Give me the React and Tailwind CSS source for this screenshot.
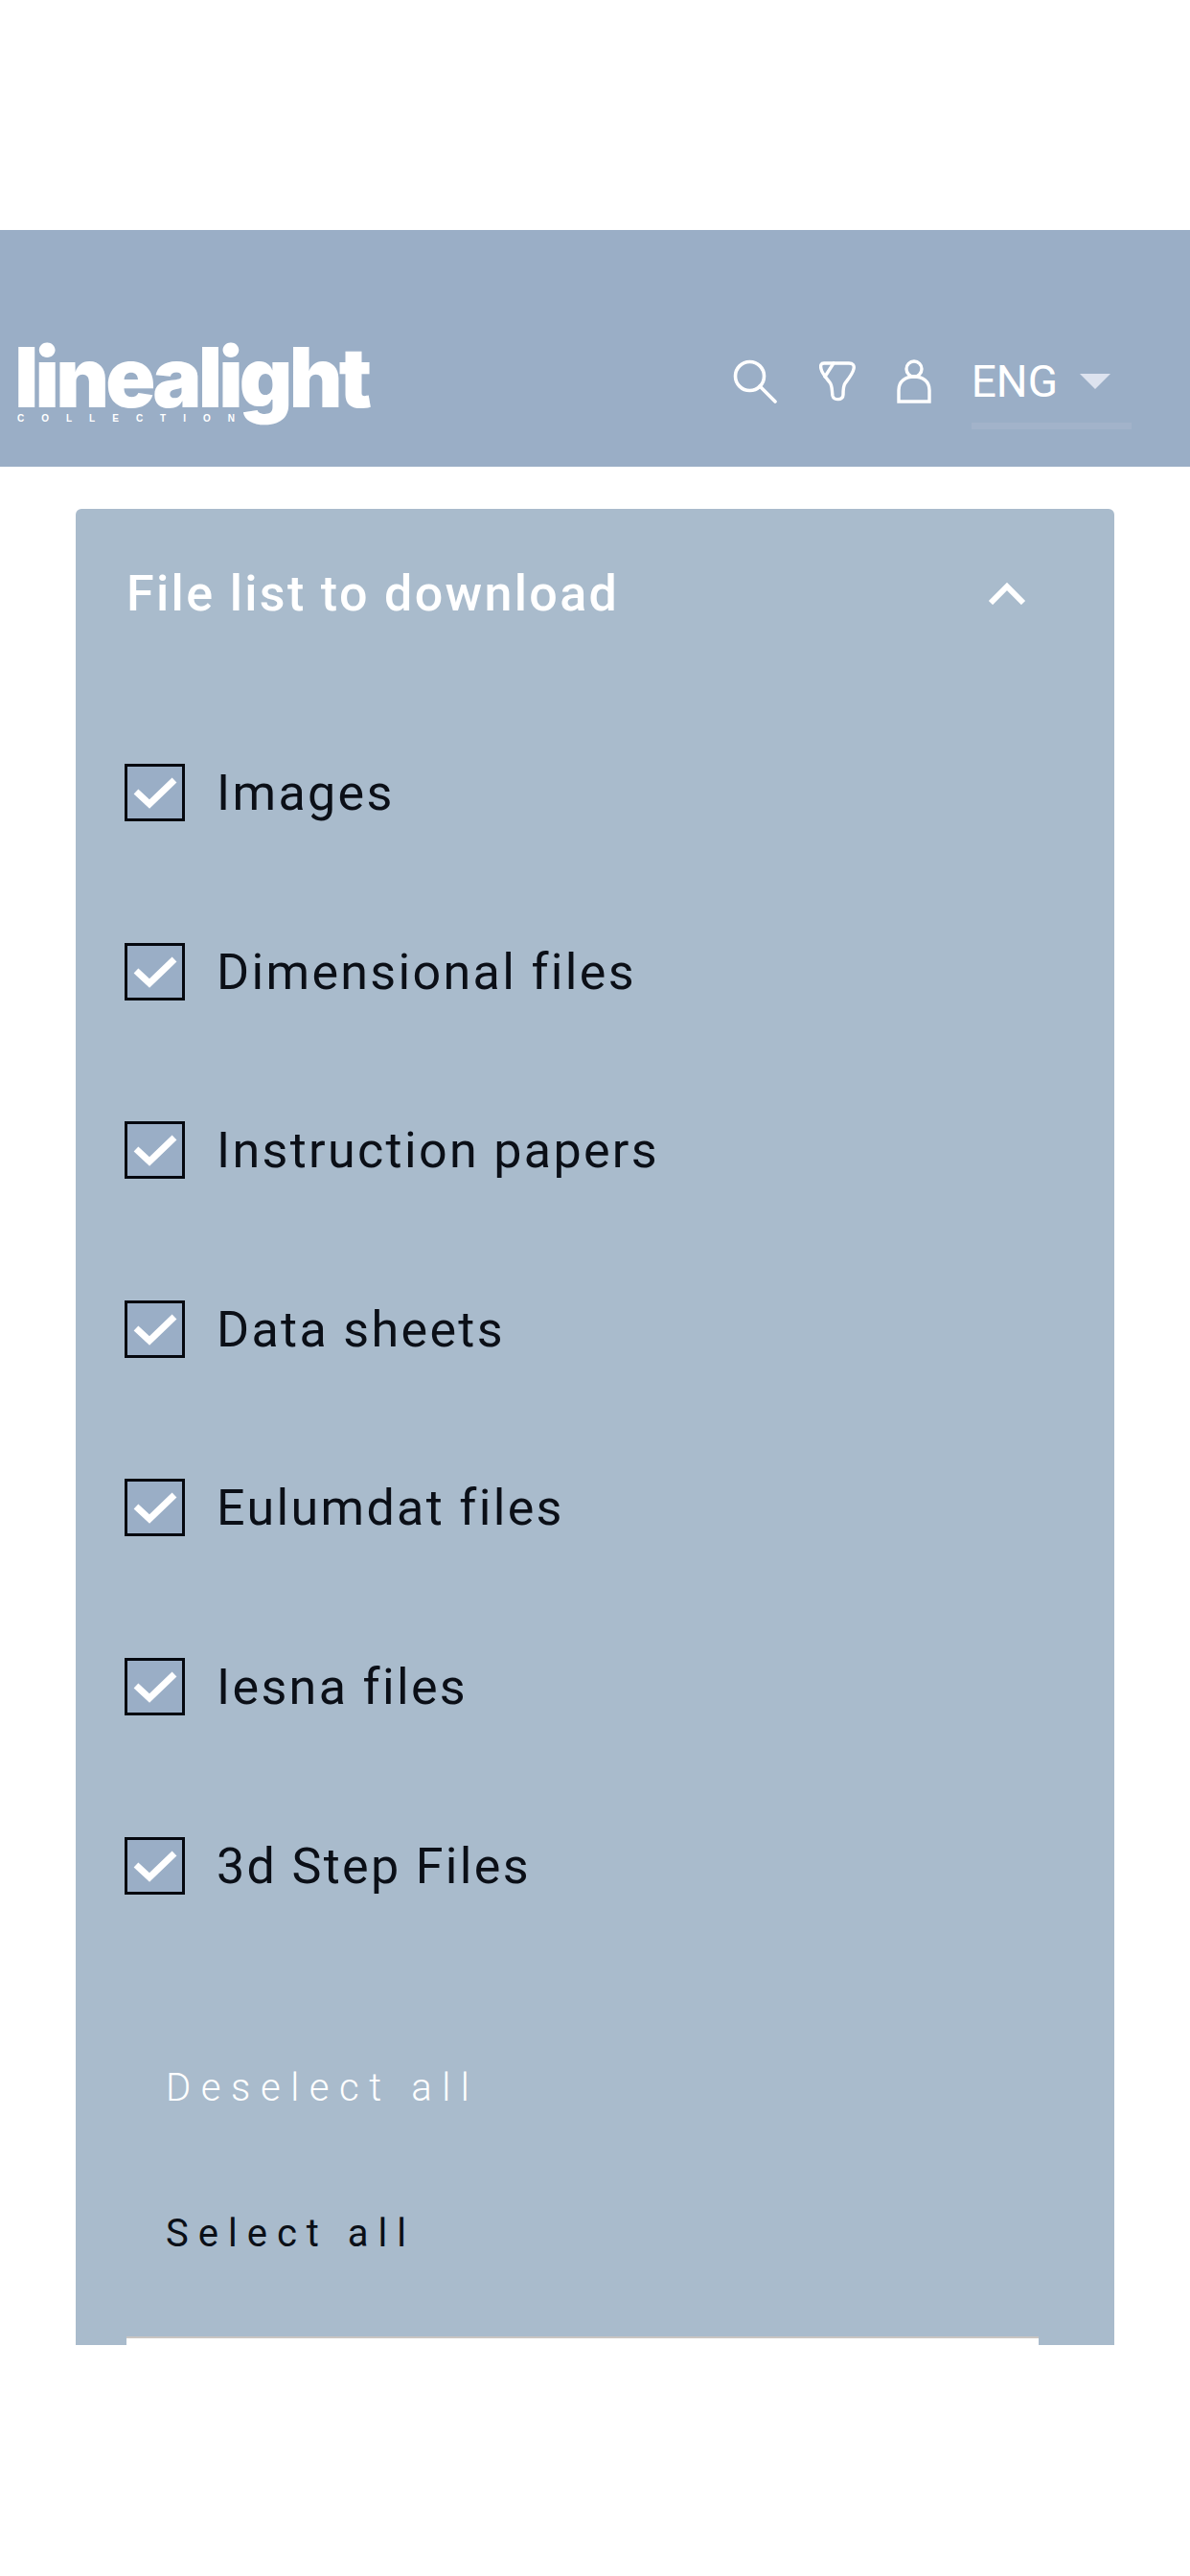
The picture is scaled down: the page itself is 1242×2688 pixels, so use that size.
import React from 'react';

const fileTypes = [
  'Images',
  'Dimensional files',
  'Instruction papers',
  'Data sheets',
  'Eulumdat files',
  'Iesna files',
  '3d Step Files',
];

const SearchIcon = () => (
  <svg width="46" height="46" viewBox="0 0 46 46" fill="none" stroke="white" strokeWidth="3.6" strokeLinecap="round">
    <circle cx="17.5" cy="17.5" r="15" />
    <path d="M28 28 L44 44" />
  </svg>
);

const FunnelIcon = () => (
  <svg width="38" height="42" viewBox="0 0 38 42" fill="none" stroke="white" strokeWidth="3.4" strokeLinejoin="round" strokeLinecap="round">
    <path d="M5 2 H31 C35 2 37 4 36 8 C35 13 30 19 27 23 C25 26 25 30 25 35 C25 41 15 41 14 36 C13 30 14 26 11 22 C8 18 3 13 2 8 C1 4 2 2 5 2 Z" />
    <path d="M15 2 L6 16" />
  </svg>
);

const UserIcon = () => (
  <svg width="36" height="46" viewBox="0 0 36 46" fill="none" stroke="white" strokeWidth="3.4">
    <circle cx="18" cy="10" r="8" />
    <path d="M2 44 V32 C2 23 9 18 18 18 C27 18 34 23 34 32 V44 Z" />
  </svg>
);

const FileRow = ({ label }) => (
  <div className="flex items-center h-[60px]">
    <div className="w-[63px] h-[60px] bg-[#9aaec6] border-[3px] border-[#05080f] flex items-center justify-center">
      <svg width="46" height="34" viewBox="0 0 46 34" fill="none" stroke="white" strokeWidth="7">
        <path d="M3 16 L17 29 L43 4" />
      </svg>
    </div>
    <span className="ml-[33px] pt-[2px] text-[52px] leading-none tracking-[0.045em] text-[#0b0f17] font-['Roboto',sans-serif]">
      {label}
    </span>
  </div>
);

const App = () => {
  return (
    <div className="min-h-[2688px] bg-white font-['Roboto',sans-serif]">
      <div className="h-[240px]" />

      <header className="h-[247px] bg-[#9aaec6] flex items-start justify-between">
        <div className="ml-[15px] mt-[112px] relative text-white">
          <div className="font-['Inter',sans-serif] font-black text-[86px] leading-[84px] tracking-[-0.045em]">
            linealight
          </div>
          <div className="absolute left-[3px] top-[79px] w-[236px] font-['Liberation_Sans',sans-serif] font-bold text-[10px] leading-[12px] tracking-[18px] whitespace-nowrap">
            COLLECTION
          </div>
        </div>

        <div className="flex items-center mt-[135px] mr-[83px]">
          <SearchIcon />
          <div className="ml-[44px]"><FunnelIcon /></div>
          <div className="ml-[43px]"><UserIcon /></div>
          <div className="ml-[42px] relative flex items-center">
            <span className="text-[46px] leading-none text-white font-normal">ENG</span>
            <span className="ml-[23px] w-0 h-0 border-x-[16px] border-x-transparent border-t-[16px] border-t-[#dde3ef]" />
            <div className="absolute left-0 right-[-22px] top-[66px] h-[7px] bg-[#a2b3ca]" />
          </div>
        </div>
      </header>

      <div className="mt-[44px] mx-[79px] h-[1916px] overflow-hidden bg-[#a9bbcc] rounded-t-[6px]">
        <div className="pl-[132px] -ml-[79px] pr-[84px] pt-[62px] flex items-center justify-between">
          <h2 className="pt-[2px] text-[52px] leading-[50px] font-medium tracking-[0.045em] text-white">
            File list to download
          </h2>
          <svg className="mr-[8px]" width="40" height="24" viewBox="0 0 40 24" fill="none" stroke="white" strokeWidth="6">
            <path d="M3 22 L20 5 L37 22" />
          </svg>
        </div>

        <div className="mt-[152px] ml-[51px] flex flex-col gap-[126.6px]">
          {fileTypes.map((label) => (
            <FileRow key={label} label={label} />
          ))}
        </div>

        <div className="ml-[94px] mt-[182px] flex flex-col gap-[112px]">
          <button className="text-left text-[40px] leading-[40px] font-light tracking-[0.265em] text-white">
            Deselect all
          </button>
          <button className="text-left text-[40px] leading-[40px] tracking-[0.25em] text-[#0b0f17]">
            Select all
          </button>
        </div>

        <div className="mt-[87px] ml-[53px] w-[952px] h-[40px] bg-white border-t-2 border-[#c9c5c2]" />
      </div>
    </div>
  );
};

export default App;
